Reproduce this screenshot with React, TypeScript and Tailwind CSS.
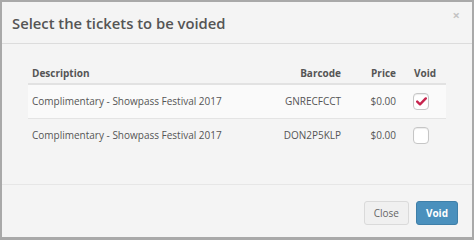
import React, { useState } from 'react';

const tickets = [
  { description: 'Complimentary - Showpass Festival 2017', barcode: 'GNRECFCCT', price: '$0.00', voided: true },
  { description: 'Complimentary - Showpass Festival 2017', barcode: 'DON2P5KLP', price: '$0.00', voided: false },
];

export default function App() {
  const [checked, setChecked] = useState(tickets.map((t) => t.voided));

  return (
    <div className="w-[474px] h-[240px] bg-[#a9a9a9] pt-[2px] pl-[2px] pr-[2px] pb-[3px] font-['Open_Sans',sans-serif]">
      <div className="h-full bg-[#f4f4f4] flex flex-col text-[#555]">
        <div className="h-[42px] flex items-center justify-between pl-[10px] pr-[12px] border-b border-[#dcdcdc]">
          <h3 className="text-[14.8px] font-semibold text-[#555] pt-[1px]">Select the tickets to be voided</h3>
          <span className="text-[13px] font-bold text-[#c4c4c4] leading-none -mt-[14px]">×</span>
        </div>

        <div className="flex-1 px-[26px] pt-[17px] border-b border-[#e6e6e6]">
          <table className="w-full text-[10px] border-collapse">
            <thead>
              <tr className="border-b-2 border-[#e2e2e2]">
                <th className="text-left font-bold pl-[4px] pb-[2px] h-[23px] align-bottom">Description</th>
                <th className="text-right font-bold pb-[2px] align-bottom w-[100px]">Barcode</th>
                <th className="text-right font-bold pb-[2px] align-bottom w-[55px]">Price</th>
                <th className="text-center font-bold pb-[2px] align-bottom w-[50px] pl-[8px]">Void</th>
              </tr>
            </thead>
            <tbody>
              {tickets.map((t, i) => (
                <tr key={t.barcode} className={`h-[34px] border-b border-[#e4e4e4] ${i === 0 ? 'bg-[#fafafa]' : ''} ${i === tickets.length - 1 ? 'border-none' : ''}`}>
                  <td className="text-left pl-[4px]">{t.description}</td>
                  <td className="text-right">{t.barcode}</td>
                  <td className="text-right">{t.price}</td>
                  <td className="text-center">
                    <button
                      onClick={() => setChecked(checked.map((c, j) => (j === i ? !c : c)))}
                      className="inline-flex items-center justify-center w-[16px] h-[17px] rounded-[4px] border border-[#c6c6c6] bg-white shadow-[inset_0_1px_1px_rgba(0,0,0,0.08)] align-middle"
                    >
                      {checked[i] && (
                        <svg width="11" height="9" viewBox="0 0 11 9">
                          <path d="M1.2 4.6 L4 7.3 L9.8 1.4" fill="none" stroke="#c7254e" strokeWidth="2.4" strokeLinecap="round" strokeLinejoin="round" />
                        </svg>
                      )}
                    </button>
                  </td>
                </tr>
              ))}
            </tbody>
          </table>
        </div>

        <div className="h-[52px] flex items-center justify-end gap-[7px] pr-[14px] pt-[4px]">
          <button className="h-[24px] px-[9px] text-[10px] text-[#666] bg-[#f0f0f0] border border-[#dadada] rounded-[3px]">Close</button>
          <button className="h-[24px] px-[9px] text-[10px] font-bold text-white bg-[#4a90bd] border border-[#3f7fa8] rounded-[3px]">Void</button>
        </div>
      </div>
    </div>
  );
}
